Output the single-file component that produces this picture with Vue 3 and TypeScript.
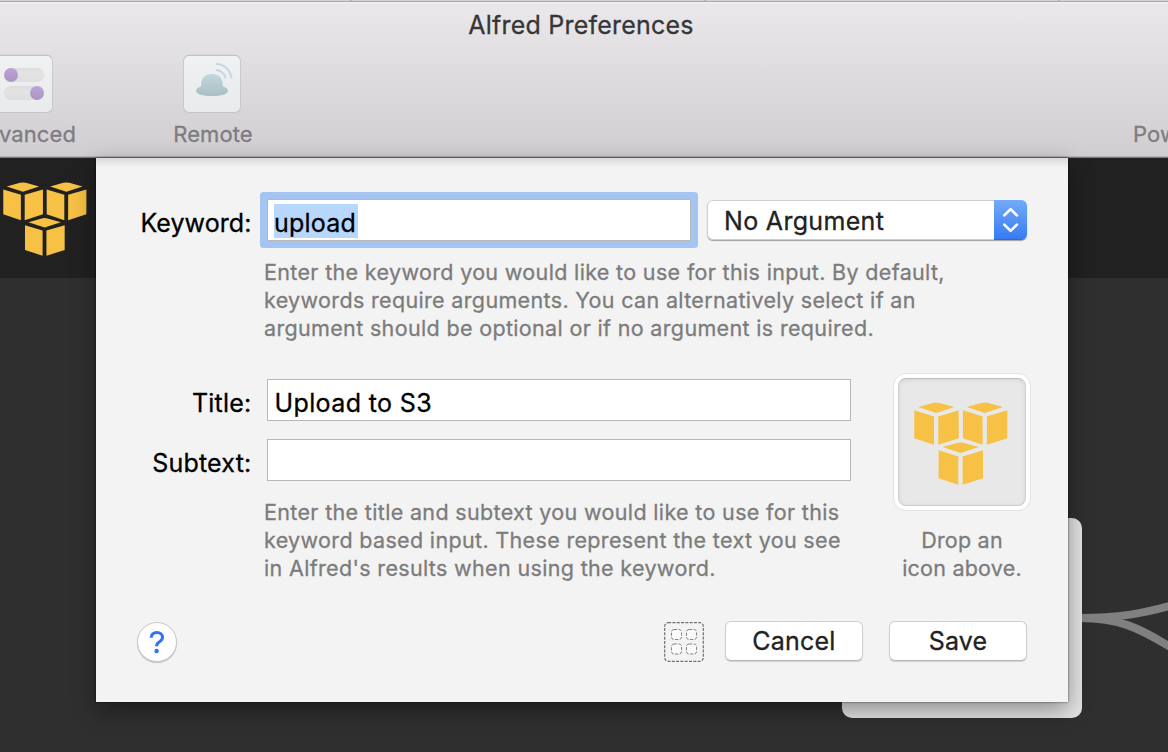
<script setup lang="ts">
import { ref } from 'vue'

const keyword = ref('upload')
const title = ref('Upload to S3')
const subtext = ref('')

const keywordHint = [
  'Enter the keyword you would like to use for this input. By default,',
  'keywords require arguments. You can alternatively select if an',
  'argument should be optional or if no argument is required.',
]
const titleHint = [
  'Enter the title and subtext you would like to use for this',
  'keyword based input. These represent the text you see',
  "in Alfred's results when using the keyword.",
]
const cubes = ['translate(0 0)', 'translate(48.6 0)', 'translate(24.3 40)']
const cells = [[7.5, 7.5], [22.5, 7.5], [7.5, 22], [22.5, 22]]
</script>

<template>
  <div class="window">
    <svg width="0" height="0" class="defs">
      <defs>
        <symbol id="cubes" viewBox="0 0 94 84">
          <g v-for="c in cubes" :key="c" :transform="c" fill="#f6c144">
            <path d="M4.2 5 19 .9Q22.300 0 25.600 .9L40.400 5 22.300 11Z" />
            <path d="M.3 8.300 20 14.400V42.700L.3 36.200Z" />
            <path d="M24.300 14.400 44.700 8.300V36.200L24.300 42.700Z" />
          </g>
        </symbol>
      </defs>
    </svg>

    <header class="toolbar">
      <div class="tabs"><i></i><i></i><i></i><i></i></div>
      <div class="caption">Alfred Preferences</div>
      <nav class="items">
        <div class="item advanced">
          <svg width="60" height="60" viewBox="0 0 60 60">
            <defs>
              <linearGradient id="tile" x2="0" y2="1"><stop stop-color="#f0f1f3" /><stop offset="1" stop-color="#e8eaeb" /></linearGradient>
              <linearGradient id="purple" x2="0" y2="1"><stop stop-color="#bda2dc" /><stop offset="1" stop-color="#a996bd" /></linearGradient>
              <linearGradient id="track" x2="0" y2="1"><stop stop-color="#dcdcdd" /><stop offset=".35" stop-color="#e3e3e3" /><stop offset="1" stop-color="#dfdfe0" /></linearGradient>
            </defs>
            <rect x="1.300" y=".8" width="57.400" height="58" rx="5.500" fill="#c3c1c4" />
            <rect x="2" y="2" width="56" height="56" rx="5" fill="url(#tile)" />
            <rect x="10" y="14" width="40" height="14" rx="7" fill="url(#track)" />
            <rect x="10" y="32" width="40" height="14" rx="7" fill="url(#track)" />
            <circle cx="17" cy="21" r="7" fill="url(#purple)" />
            <circle cx="43" cy="39" r="7" fill="url(#purple)" />
          </svg>
          <span>Advanced</span>
        </div>
        <div class="item remote">
          <svg width="60" height="60" viewBox="0 0 60 60">
            <defs>
              <linearGradient id="hat" x2="0" y2="1"><stop stop-color="#c0d7dd" /><stop offset="1" stop-color="#a9bfc4" /></linearGradient>
            </defs>
            <rect x="1.300" y=".8" width="57.400" height="58" rx="5.500" fill="#c3c1c4" />
            <rect x="2" y="2" width="56" height="56" rx="5" fill="url(#tile)" />
            <path d="M14 37Q14 33.500 19 32.500C19 24 23 20 30 20S41 24 41 32.500Q46 33.500 46 37C46 40 39 42 30 42S14 40 14 37Z" fill="url(#hat)" />
            <path d="M34 10A15.500 15.500 0 0 1 49.500 24.500M34 16A10 10 0 0 1 43.500 24.500" fill="none" stroke="#c3d9e0" stroke-width="2" />
          </svg>
          <span>Remote</span>
        </div>
        <div class="item power"><span>Powerpack</span></div>
      </nav>
    </header>

    <main class="workspace">
      <div class="banner"><svg width="84" height="75" viewBox="0 0 94 84" preserveAspectRatio="none"><use href="#cubes" width="94" height="84" /></svg></div>
      <div class="canvas">
        <svg class="wires" width="88" height="90" viewBox="0 0 88 90" fill="none" stroke="#808080" stroke-width="8">
          <path d="M0 37C38 37 61 33 92 24.300" />
          <path d="M0 37C38 37 58 46 92 67" />
        </svg>
        <div class="node"></div>
      </div>

      <section class="sheet">
        <div class="row keyword-row">
          <label class="t-keyword"><span>Keyword:</span></label>
          <div class="field focused"><span class="selected">{{ keyword }}</span></div>
          <div class="select">
            <span>No Argument</span>
            <div class="stepper">
              <svg width="33" height="40" viewBox="0 0 33 40" fill="none" stroke="#fff" stroke-width="2.700" stroke-linecap="round" stroke-linejoin="round">
                <path d="M10.300 15.400 16.600 9.100 22.900 15.400M10.300 24.600 16.600 30.900 22.900 24.600" />
              </svg>
            </div>
          </div>
        </div>
        <div class="hint first"><p v-for="line in keywordHint" :key="line">{{ line }}</p></div>

        <div class="details">
          <div class="inputs">
            <div class="row"><label><span>Title:</span></label><div class="field wide"><span>{{ title }}</span></div></div>
            <div class="row"><label><span>Subtext:</span></label><div class="field wide">{{ subtext }}</div></div>
            <div class="hint"><p v-for="line in titleHint" :key="line">{{ line }}</p></div>
          </div>
          <div class="drop">
            <div class="well"><div class="well-inner"><svg width="94" height="84"><use href="#cubes" width="94" height="84" /></svg></div></div>
            <div class="hint"><p>Drop an</p><p>icon above.</p></div>
          </div>
        </div>

        <footer class="actions">
          <button class="help" aria-label="Help">
            <svg width="38" height="38" viewBox="0 0 38 38">
              <path d="M13.300 14.700C13.300 11.500 15.500 9.500 18.900 9.500C22.200 9.500 24.500 11.400 24.500 14.200C24.500 16.300 23.400 17.500 21.500 18.700C19.500 19.900 18.600 21 18.600 23.200" fill="none" stroke="#2f74f5" stroke-width="3" />
              <circle cx="18.600" cy="28" r="2.200" fill="#2f74f5" />
            </svg>
          </button>
          <svg class="layout" width="40" height="40" viewBox="0 0 40 40" fill="none" stroke="#707070">
            <rect x=".7" y=".7" width="38.600" height="38.600" rx="3.500" stroke-width="1.200" stroke-dasharray="3 1.300" />
            <rect v-for="(c, i) in cells" :key="i" :x="c[0]" :y="c[1]" width="10" height="10" rx="2.500" fill="#fafafa" stroke="#858585" stroke-dasharray="3.200 1.400" />
          </svg>
          <button class="push cancel"><span>Cancel</span></button>
          <button class="push save"><span>Save</span></button>
        </footer>
      </section>
    </main>
  </div>
</template>

<style>
html,
body {
  margin: 0;
  overflow: hidden;
}
</style>

<style scoped>
.window {
  width: 1168px;
  height: 752px;
  display: flex;
  flex-direction: column;
  overflow: hidden;
  background: #2f2f2f;
  font-family: Inter, Roboto, "Liberation Sans", sans-serif;
  font-size: 25px;
  letter-spacing: 0.22px;
  -webkit-text-stroke: 0.3px currentColor;
  color: #000;
}
.defs { position: absolute; }
.toolbar {
  box-sizing: border-box;
  height: 158px;
  flex: none;
  background: linear-gradient(#eae8ea 2px, #d0ced1 156px);
  border-bottom: 1px solid #7c7b7d;
  box-shadow: inset 0 -1px #b4b2b5;
  overflow: hidden;
}
.tabs {
  height: 1px;
  display: flex;
  background: #d5d5d5;
  border-bottom: 1px solid #a5a5a5;
  box-shadow: 0 1px #f5f4f5;
}
.tabs i { box-sizing: border-box; width: 354px; flex: none; border-right: 2px solid #b3b3b3; }
.tabs i:first-child { width: 352px; }
.caption {
  height: 46px;
  line-height: 46px;
  text-align: center;
  color: #363636;
  padding-right: 6px;
  white-space: nowrap;
}
.items { display: flex; height: 108px; padding-top: 6px; color: #7f7c80; font-size: 22px; letter-spacing: 0.1px; }
.item { display: flex; flex-direction: column; flex: none; align-items: center; }
.item svg { display: block; }
.item span { line-height: 32px; margin-top: 4px; }
.advanced { width: 112px; margin-left: -32px; }
.advanced span { margin-left: -2px; }
.remote { width: 100px; margin-left: 82px; }
.remote span { margin-left: 2px; }
.power { margin-left: 871px; padding-top: 60px; }
.workspace { position: relative; flex: 1; }
.banner { box-sizing: border-box; height: 120px; background: #212121; padding: 24px 0 0 3px; }
.banner svg { display: block; }
.canvas { height: 474px; background: #2f2f2f; }
.node {
  position: absolute;
  left: 842px;
  top: 360px;
  width: 240px;
  height: 200px;
  border-radius: 10px;
  background: #e2e3e2;
}
.wires { position: absolute; left: 1080px; top: 423px; }
.sheet {
  position: absolute;
  left: 96px;
  top: 0;
  box-sizing: border-box;
  width: 972px;
  height: 544px;
  padding-top: 41px;
  background: linear-gradient(#d9d9d9, #e5e5e5 4px, #ededed 8px, #f3f3f3 9px);
  box-shadow: 0 0 2px rgba(0, 0, 0, .65), 0 8px 22px rgba(0, 0, 0, .38);
}
.row { display: flex; align-items: center; height: 42px; }
.row label { width: 155.5px; margin-right: 15.5px; text-align: right; white-space: nowrap; flex: none; line-height: 42px; padding-top: 5px; box-sizing: border-box; }
.row .t-keyword { letter-spacing: 0.08px; }
.field {
  box-sizing: border-box;
  height: 42px;
  border: 1px solid #b8b8b8;
  background: #fff;
  padding: 4px 0 0 6px;
  line-height: 36px;
  white-space: nowrap;
}
.focused { width: 424px; box-shadow: 0 0 0 7px #a4c5f2; border-radius: 1px; }
.selected { display: inline-block; height: 34px; width: 84px; line-height: 38px; background: #b8d7fc; }
.wide { width: 584px; padding-top: 5px; padding-left: 6.5px; letter-spacing: 0.38px; }
.select {
  box-sizing: border-box;
  display: flex;
  justify-content: space-between;
  width: 320px;
  height: 40px;
  margin-left: 16px;
  border-radius: 6px;
  background: #fff;
  box-shadow: 0 0 0 1px #cfcfcf inset, 0 1px 1px rgba(0, 0, 0, .35);
  line-height: 42px;
  padding-left: 17px;
  letter-spacing: 0.32px;
  color: #222;
  overflow: hidden;
}
.stepper { width: 33px; height: 40px; background: linear-gradient(#72acf6, #3679f6); box-shadow: inset 0 -1px #2b66ee; }
.stepper svg { display: block; }
.hint { color: #7c7c7c; font-size: 21.5px; letter-spacing: 0.34px; }
.hint p { margin: 0; height: 28px; line-height: 28px; white-space: nowrap; }
.first { margin: 17px 0 37px 168px; }
.details { display: flex; height: 242px; }
.inputs { width: 797px; }
.inputs .row + .row { margin-top: 18px; }
.inputs .hint { margin: 17px 0 0 168px; }
.drop { width: 138px; margin-top: -6px; text-align: center; }
.well {
  box-sizing: border-box;
  height: 138px;
  padding: 4px;
  border-radius: 13px;
  background: #fff;
  border: 1px solid #e3e3e3;
}
.well-inner {
  box-sizing: border-box;
  height: 128px;
  padding: 23px 0 0 15px;
  border-radius: 8px;
  background: #e8e8e8;
  border: 1px solid #cfcfcf;
  border-top-color: #bdbdbd;
  box-shadow: inset 0 1px 4px rgba(0, 0, 0, .09);
  text-align: left;
}
.well-inner svg { display: block; }
.drop .hint { margin: 15px 0 0; letter-spacing: 0.22px; }
.actions { display: flex; height: 42px; }
button { font: inherit; letter-spacing: inherit; padding: 0; border: 0; background: #fff; color: #222; box-sizing: border-box; }
.help { width: 40px; height: 40px; margin: 1px 487px 0 41px; border-radius: 50%; border: 1px solid #c9c9c9; box-shadow: 0 1px 1px rgba(0, 0, 0, .2); }
.help svg { display: block; }
.layout { margin-top: 1px; flex: none; }
.push { height: 40px; width: 138px; border-radius: 6px; border: 1px solid #cfcfcf; border-bottom-color: #b8b8b8; box-shadow: 0 1px 1px rgba(0, 0, 0, .14); line-height: 38px; }
.cancel { margin-left: 21px; }
.save { margin-left: 26px; }
</style>
